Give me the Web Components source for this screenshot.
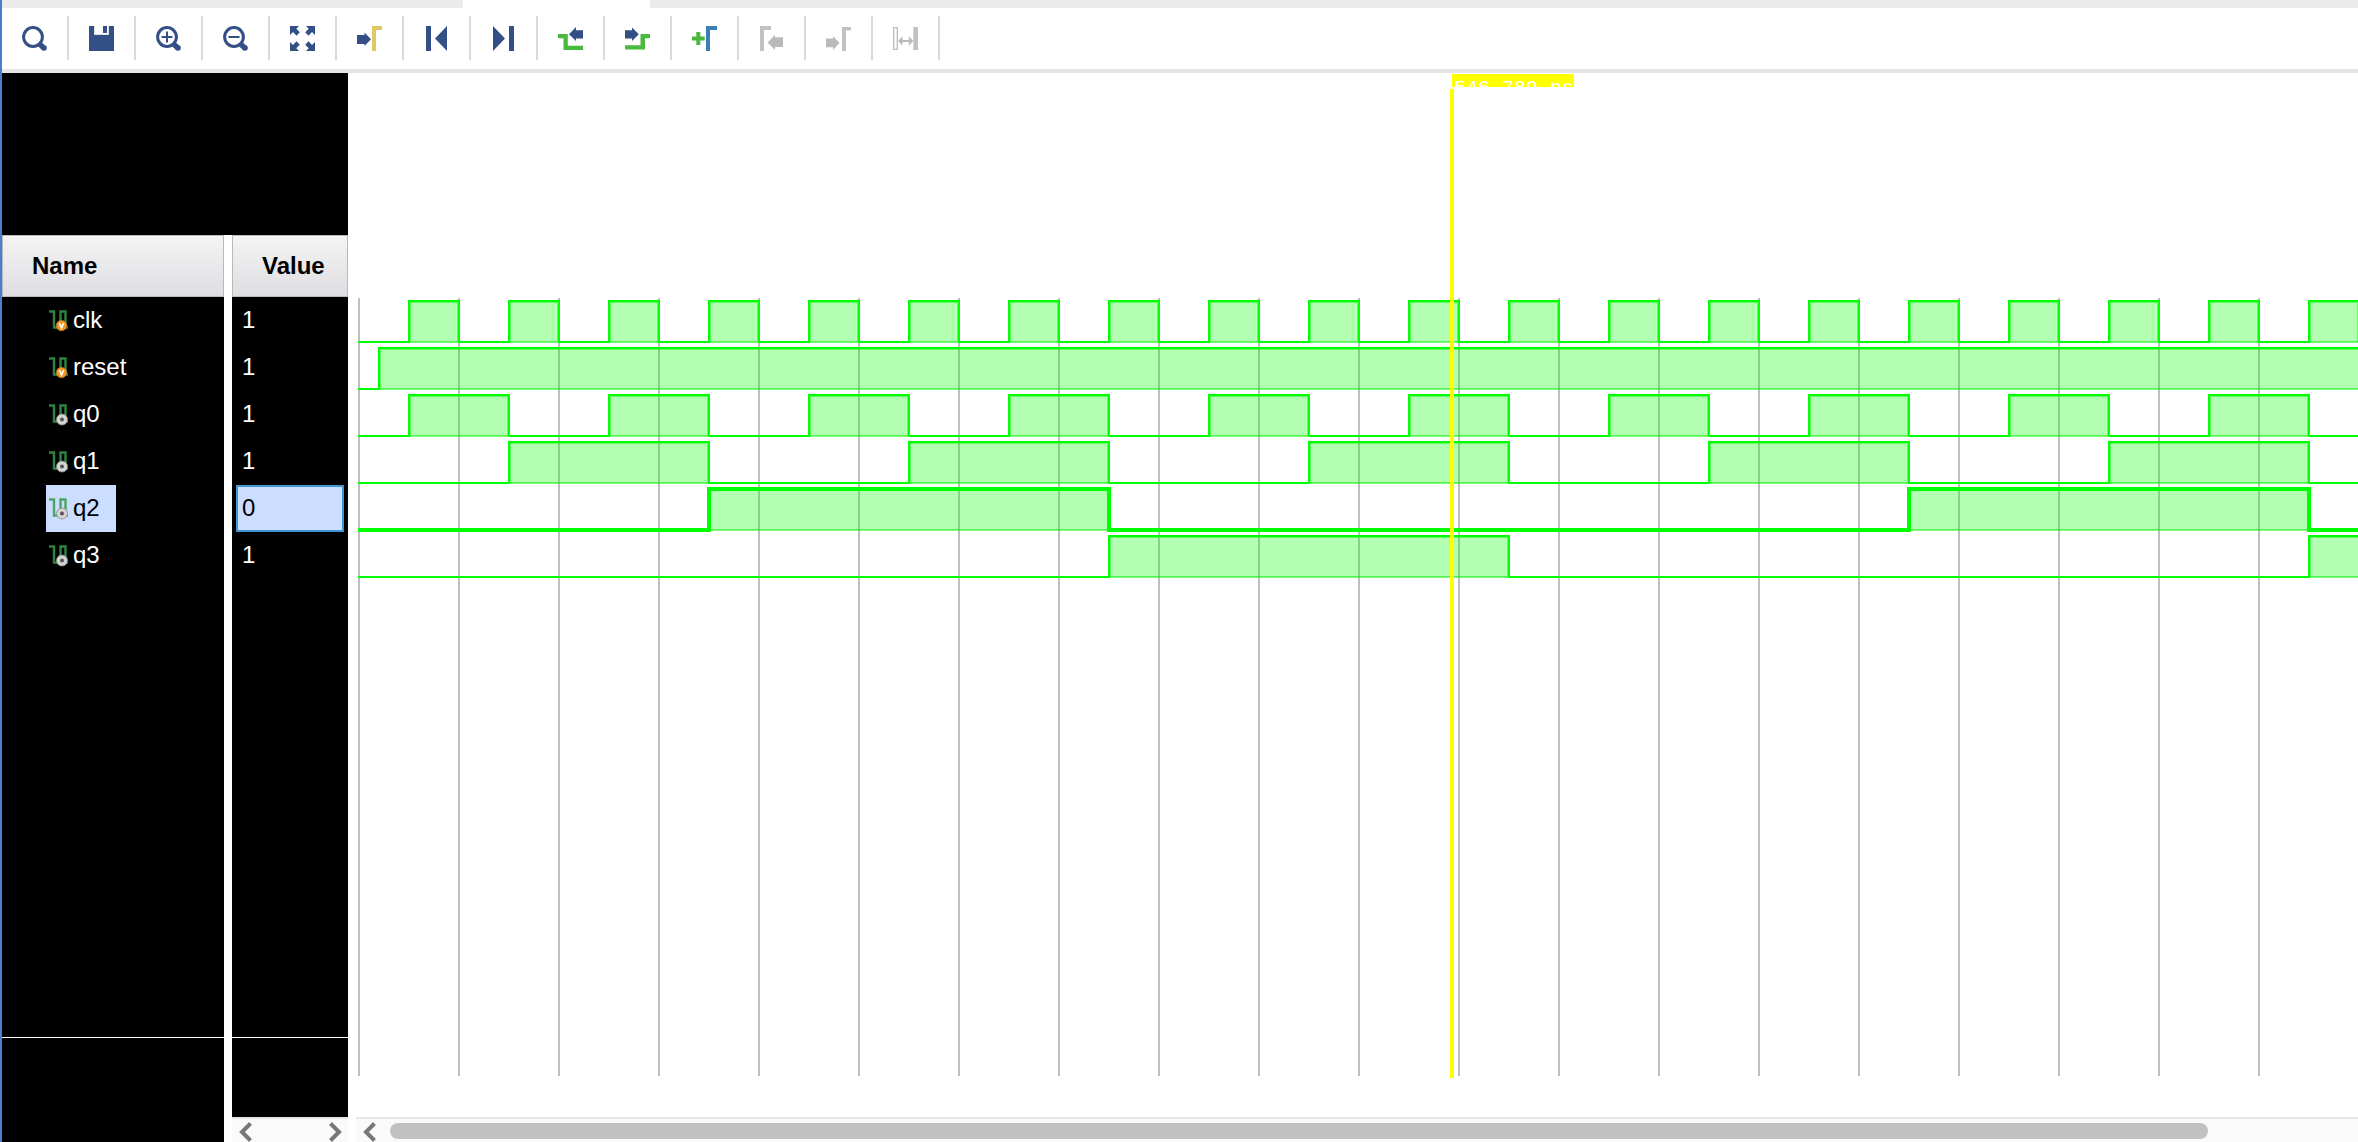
<!DOCTYPE html>
<html lang="en">
<head>
<meta charset="utf-8">
<title>Waveform</title>
<style>
html,body{margin:0;height:100%}
body{font-family:"Liberation Sans",Arial,sans-serif;font-size:24px;background:#fff;color:#000;overflow:hidden}
</style>
</head>
<body>
<wave-viewer></wave-viewer>
<script>
const NAVY='#334f85', GREEN='#4ab93f', GREY='#bababa';
const ring=`<circle cx="11" cy="11" r="9.4" fill="none" stroke="${NAVY}" stroke-width="3"/><path d="M18 18.5L22.500 22.500" stroke="${NAVY}" stroke-width="5.500" stroke-linecap="butt"/><circle cx="22" cy="22" r="2.800" fill="${NAVY}"/>`;
const ICONS={
 search:ring,
 save:`<path fill="${NAVY}" d="M0 0H25V25H0Z"/><path fill="#ddd" d="M5 0H20V9H5Z"/><path fill="#fff" d="M6 0H19V8H6Z"/><path fill="${NAVY}" d="M14 0H18V7H14Z"/>`,
 zoomin:ring+`<path d="M5.500 11H16.500M11 5.500V16.500" stroke="${NAVY}" stroke-width="2"/>`,
 zoomout:ring+`<path d="M5.500 11H16.500" stroke="${NAVY}" stroke-width="2"/>`,
 fit:`<g fill="${NAVY}"><path d="M0 0H9L6.300 2.800L9.800 6.300L6.500 9.700L3 6.100L0 9Z"/><path transform="matrix(-1 0 0 1 25 0)" d="M0 0H9L6.300 2.800L9.800 6.300L6.500 9.700L3 6.100L0 9Z"/><path transform="matrix(1 0 0 -1 0 25)" d="M0 0H9L6.300 2.800L9.800 6.300L6.500 9.700L3 6.100L0 9Z"/><path transform="matrix(-1 0 0 -1 25 25)" d="M0 0H9L6.300 2.800L9.800 6.300L6.500 9.700L3 6.100L0 9Z"/></g>`,
 cursor:`<path fill="${NAVY}" d="M0 9H7.500V6.500L14 13.300L7.500 20V18H0Z"/><path fill="#e0c964" d="M15 0H25V4H19V25H15Z"/>`,
 first:`<path fill="${NAVY}" d="M2 0H7V25H2ZM23 0V25L11 12.500Z"/>`,
 last:`<path fill="${NAVY}" d="M18 0H23V25H18ZM2 0V25L14 12.500Z"/>`,
 prevt:`<path fill="${NAVY}" d="M25 4.300V12.600H18V15L11 8.300L18 1V4.300Z"/><path fill="${GREEN}" d="M0 8H9.800V19.700H25V24H5.500V12.300H0Z"/>`,
 nextt:`<path fill="${NAVY}" d="M0 4.300V12.600H7V15L13.800 8.300L7 1.500V4.300Z"/><path fill="${GREEN}" d="M25 8H15.500V19.300H0V23.500H20V12.300H25Z"/>`,
 add:`<path fill="${GREEN}" d="M4.300 6H8.300V10.500H12.700V14.500H8.300V19H4.300V14.500H0V10.500H4.300Z"/><path fill="#3b80b5" d="M14 0H25V4H18V25H14Z"/>`,
 prevm:`<path fill="#c1c1c1" d="M1 0H12V4H5V25H1Z"/><path fill="${GREY}" d="M24 11.300V21H16V24L8.700 16.500L16 8.700V11.300Z"/>`,
 nextm:`<path fill="${GREY}" d="M0 12.500V21.300H7V24L13.500 17L7 10V12.500Z"/><path fill="#c1c1c1" d="M16 1H25V4.500H20V25H16Z"/>`,
 swap:`<path fill="none" stroke="#bdbdbd" stroke-width="1.300" d="M.7 1.700H4.300V23.300H.7Z"/><path fill="#c1c1c1" d="M20.300 1H25V24H20.300Z"/><path fill="${GREY}" d="M5 15L9.500 10.200V14H15.800V10.200L20.300 15L15.800 19.800V16H9.500V19.800Z"/>`
};
const SIGNALS=[
 {name:'clk',value:'1',kind:'v',start:50,high:50,period:100},
 {name:'reset',value:'1',kind:'v',start:20,high:1e5,period:1e6},
 {name:'q0',value:'1',kind:'o',start:50,high:100,period:200},
 {name:'q1',value:'1',kind:'o',start:150,high:200,period:400},
 {name:'q2',value:'0',kind:'o',start:350,high:400,period:1200,selected:true},
 {name:'q3',value:'1',kind:'o',start:750,high:400,period:1200}
];

function define(name,css,render){
  customElements.define(name,class extends HTMLElement{
    connectedCallback(){
      if(this.shadowRoot) return;
      this.attachShadow({mode:'open'}).innerHTML=`<style>*{box-sizing:border-box}${css}</style>`+render(this);
    }
  });
}

define('tool-button',`
:host{display:block;width:67px;padding:8px 0 9px}
button{display:flex;align-items:center;justify-content:center;width:67px;height:44px;padding:0;border:0;border-right:2px solid #dadada;background:none}
svg{display:block}`,
el=>`<button type="button" title="${el.getAttribute('label')}" aria-label="${el.getAttribute('label')}" ${el.hasAttribute('off')?'disabled':''}><svg width="25" height="25" viewBox="0 0 25 25">${ICONS[el.getAttribute('icon')]}</svg></button>`);

define('tab-strip',`
:host{display:flex;height:8px;background:#ebebeb}
div{margin-left:461px;width:187px;background:#fff}`,
()=>`<div></div>`);

define('tool-bar',`
:host{display:flex;height:65px;border-bottom:4px solid #e6e6e6;background:#fff}`,
()=>[['search','Search'],['save','Save'],['zoomin','Zoom in'],['zoomout','Zoom out'],['fit','Zoom fit'],['cursor','Go to cursor'],['first','Go to start'],['last','Go to end'],['prevt','Previous transition'],['nextt','Next transition'],['add','Add marker'],['prevm','Previous marker',1],['nextm','Next marker',1],['swap','Swap cursors',1]]
 .map(([i,l,o])=>`<tool-button icon="${i}" label="${l}" ${o?'off':''}></tool-button>`).join(''));

define('signal-icon',`
:host{display:block;width:20px;height:22px;flex:none}svg{display:block}`,
el=>`<svg width="20" height="22" viewBox="0 0 20 22"><path d="M0 1.500H5V17.500H11.500V1.500H16.500V17.500H19" fill="none" stroke="${el.hasAttribute('lit')?'#4aa763':'#2e8440'}" stroke-width="2.400"/>${
 el.getAttribute('kind')==='v'
 ?`<circle cx="12.500" cy="15.500" r="5.300" fill="#f7941d" stroke="#a9763a" stroke-width=".6"/><path d="M10.300 13L12.500 18L14.700 13" fill="none" stroke="#fff" stroke-width="1.600"/>`
 :`<circle cx="13" cy="15.500" r="5.500" fill="#d4d4d4" stroke="#8a8a8a" stroke-width=".8"/><circle cx="13" cy="15.500" r="2" fill="#555"/>`}</svg>`);

define('scroll-arrow',`
:host{display:block}button{display:block;padding:0;border:0;background:none}svg{display:block}:host([dir=right]) svg{transform:scaleX(-1)}`,
el=>`<button type="button" aria-label="Scroll ${el.getAttribute('dir')}"><svg width="14" height="20" viewBox="0 0 14 20"><path d="M11.500 1.500L3 10L11.500 18.500" fill="none" stroke="#777" stroke-width="4"/></svg></button>`);

const tableCss=`
:host{display:flex;flex-direction:column;background:#000;color:#fff}
table{border-collapse:separate;border-spacing:0;width:100%}
th{height:62px;padding:0 0 0 29px;border:1px solid #b9b9b9;background:linear-gradient(#f4f4f4,#dedee2);color:#000;text-align:left;font-weight:bold}
td{height:47px;padding:0}
span{display:block;padding-bottom:2px}
.grow{flex:1}
hr{margin:0;border:0;height:1px;background:#fff}`;

define('name-column',tableCss+`
:host{width:222px}
.cell{display:flex;align-items:center;gap:4px;width:max-content;height:47px;margin-left:44px;padding:0 16px 0 3px}
.sel{background:#ccdeff;color:#000}
.foot{height:104px}`,
()=>`<table><thead><tr><th>Name</th></tr></thead><tbody>${SIGNALS.map(s=>`<tr><td><div class="cell ${s.selected?'sel':''}"><signal-icon kind="${s.kind}" ${s.selected?'lit':''}></signal-icon><span>${s.name}</span></div></td></tr>`).join('')}</tbody></table><div class="grow"></div><hr><div class="foot"></div>`);

define('value-column',tableCss+`
:host{width:116px}
.cell{display:flex;align-items:center;height:47px;margin:0 4px;padding-left:6px}
.sel{background:#ccdeff;color:#000;border:2px solid #3f94d2;padding-left:4px}
.foot{height:79px}
.scroll{display:flex;justify-content:space-between;height:25px;padding:3px 6px 0 7px;border-top:2px solid #e6e6e6;background:#fafafa}`,
()=>`<table><thead><tr><th>Value</th></tr></thead><tbody>${SIGNALS.map(s=>`<tr><td><div class="cell ${s.selected?'sel':''}"><span>${s.value}</span></div></td></tr>`).join('')}</tbody></table><div class="grow"></div><hr><div class="foot"></div><div class="scroll"><scroll-arrow dir="left"></scroll-arrow><scroll-arrow dir="right"></scroll-arrow></div>`);

define('wave-row',`
:host{display:block;height:47px}svg{display:block;width:100%;height:47px;overflow:hidden}`,
el=>{
  const s=SIGNALS[+el.getAttribute('index')], x0=3, hi=4, lo=45, end=4000;
  let d=`M${x0-1} ${lo}`, fills='';
  for(let a=s.start;a<end;a+=s.period){
    const l=x0+a, r=Math.min(x0+a+s.high,end+100);
    d+=`H${l}V${hi}H${r}V${lo}`;
    fills+=`<path fill="#0f0" fill-opacity=".3" d="M${l} ${hi}H${r}V46H${l}Z"/><path fill="none" stroke="#0f0" stroke-opacity=".45" d="M${l+1.5} 44.5V5.5H${r-1.5}V44.5"/><path stroke="#00e800" stroke-opacity=".55" d="M${l} 44.5H${r}"/><path stroke="#0f0" stroke-opacity=".3" d="M${l} 45.5H${r}"/>`;
  }
  if(s.high<1e4) d+=`H${end+200}`;
  return `<svg shape-rendering="crispEdges" aria-hidden="true">${fills}<path d="${d}" fill="none" stroke="#0f0" stroke-width="${s.selected?4:2}"/></svg>`;
});

define('time-cursor',`
:host{position:absolute;left:1094px;top:1px;bottom:64px;width:124px;display:flex;flex-direction:column;gap:2px}
.flag{height:13px;margin-left:2px;padding:5px 0 0 2px;overflow:hidden;background:#ff0;color:#fff;font:20px/20px "Liberation Mono",monospace;white-space:pre}
.line{flex:1;width:4px;background:#ff0}`,
()=>`<div class="flag">546.789 ns</div><div class="line"></div>`);

define('wave-canvas',`
:host{position:relative;display:flex;flex-direction:column;flex:1;min-width:0;overflow:hidden}
.ruler{height:225px}
.grid{flex:1;margin-bottom:41px;background:repeating-linear-gradient(90deg,#bfbfbf 0 2px,transparent 2px 100px) 2px 0 no-repeat}
.rows{margin-top:-1px}
.scroll{display:flex;height:25px;padding:3px 150px 0 7px;gap:13px;border-top:2px solid #e6e6e6;background:#fafafa}
.thumb{flex:1;height:16px;margin-top:1px;border-radius:8px;background:#c1c1c1}`,
()=>`<div class="ruler"></div><div class="grid"><div class="rows">${SIGNALS.map((s,i)=>`<wave-row index="${i}"></wave-row>`).join('')}</div></div><div class="scroll"><scroll-arrow dir="left"></scroll-arrow><div class="thumb"></div></div><time-cursor></time-cursor>`);

define('wave-viewer',`
:host{display:flex;flex-direction:column;height:100vh;box-sizing:border-box;border-left:2px solid #4a7fd0;background:#fff}
main{display:flex;flex:1;gap:8px;min-height:0}
.left{display:flex;flex-direction:column;width:346px}
.blank{height:162px;background:#000}
.cols{display:flex;flex:1;gap:8px}`,
()=>`<tab-strip></tab-strip><tool-bar></tool-bar><main><div class="left"><div class="blank"></div><div class="cols"><name-column></name-column><value-column></value-column></div></div><wave-canvas></wave-canvas></main>`);
</script>
</body>
</html>
